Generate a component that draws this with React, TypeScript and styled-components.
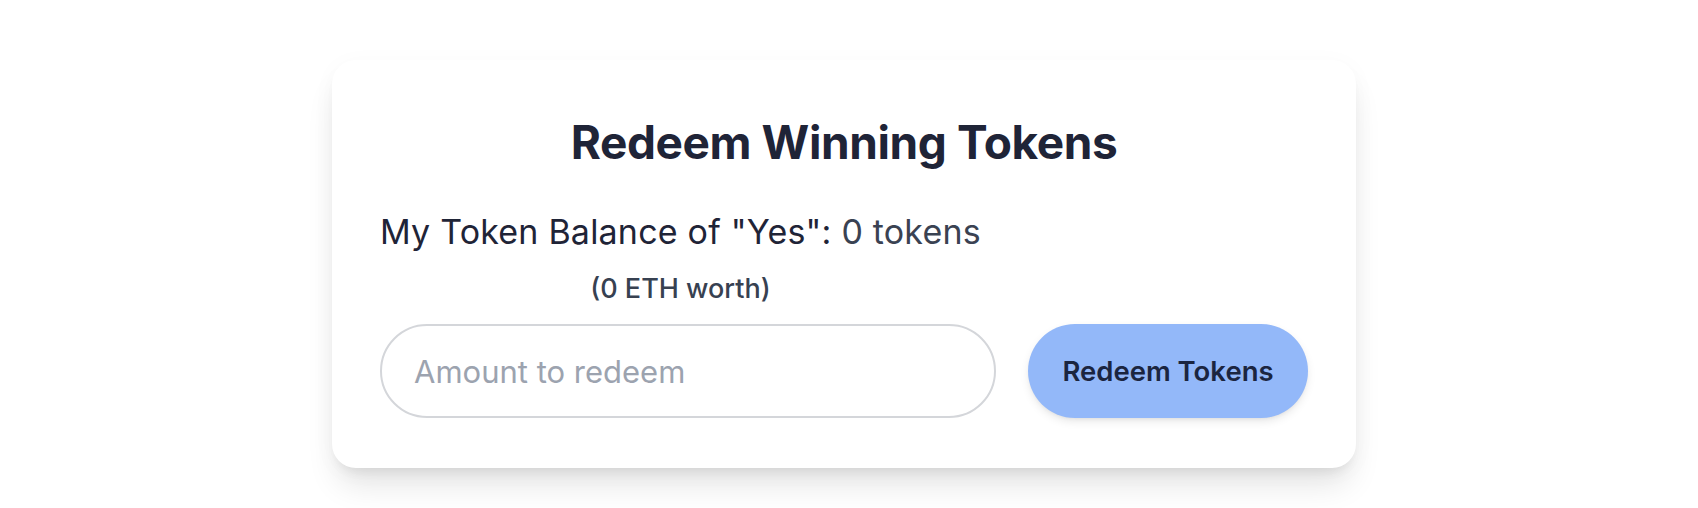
import React from "react";
import styled, { createGlobalStyle } from "styled-components";

const GlobalStyle = createGlobalStyle`
  html, body {
    margin: 0;
    padding: 0;
    background: #ffffff;
    font-family: Inter, "Noto Sans", "Liberation Sans", sans-serif;
  }
  * { box-sizing: border-box; }
`;

const Page = styled.main`
  display: flex;
  justify-content: center;
  align-items: flex-start;
  min-height: 100vh;
  padding: 60px 10px 40px 0;
`;

const Card = styled.section`
  width: 1024px;
  background: #ffffff;
  border-radius: 24px;
  padding: 59px 48px 50px;
  box-shadow: 0 22px 32px -6px rgba(0, 0, 0, 0.11), 0 8px 12px -6px rgba(0, 0, 0, 0.08),
    0 4px 24px rgba(0, 0, 0, 0.03);
  display: flex;
  flex-direction: column;
`;

const Title = styled.h2`
  margin: 0;
  text-align: center;
  font-size: 46px;
  line-height: 46px;
  font-weight: 700;
  color: #1f2437;
  letter-spacing: -0.4px;
`;

const BalanceBlock = styled.div`
  align-self: flex-start;
  display: flex;
  flex-direction: column;
  align-items: center;
  margin-top: 46px;
`;

const BalanceLine = styled.p`
  margin: 0;
  font-size: 34px;
  line-height: 42px;
  font-weight: 400;
  letter-spacing: 0.2px;
  color: #1f2437;
`;

const BalanceValue = styled.span`
  color: #3a4252;
`;

const Worth = styled.p`
  margin: 20px 0 0;
  font-size: 27px;
  line-height: 32px;
  font-weight: 500;
  color: #374151;
`;

const Row = styled.div`
  display: flex;
  gap: 32px;
  margin-top: 19px;
`;

const AmountInput = styled.input`
  flex: 1;
  min-width: 0;
  height: 94px;
  border: 2px solid #d4d6da;
  border-radius: 9999px;
  padding: 0 32px;
  font-family: inherit;
  font-size: 31px;
  color: #1f2437;
  background: #ffffff;
  outline: none;
  &::placeholder {
    color: #9ca3af;
  }
`;

const RedeemButton = styled.button`
  width: 280px;
  height: 94px;
  border: none;
  border-radius: 9999px;
  background: #93b8f9;
  color: #1b2540;
  font-family: inherit;
  font-size: 27.5px;
  font-weight: 600;
  box-shadow: 0 4px 10px -1px rgba(0, 0, 0, 0.1), 0 2px 4px -2px rgba(0, 0, 0, 0.08);
  cursor: pointer;
`;

export default function App() {
  return (
    <>
      <GlobalStyle />
      <Page>
        <Card>
          <Title>Redeem Winning Tokens</Title>
          <BalanceBlock>
            <BalanceLine>
              My Token Balance of "Yes": <BalanceValue>0 tokens</BalanceValue>
            </BalanceLine>
            <Worth>(0 ETH worth)</Worth>
          </BalanceBlock>
          <Row>
            <AmountInput placeholder="Amount to redeem" />
            <RedeemButton>Redeem Tokens</RedeemButton>
          </Row>
        </Card>
      </Page>
    </>
  );
}
